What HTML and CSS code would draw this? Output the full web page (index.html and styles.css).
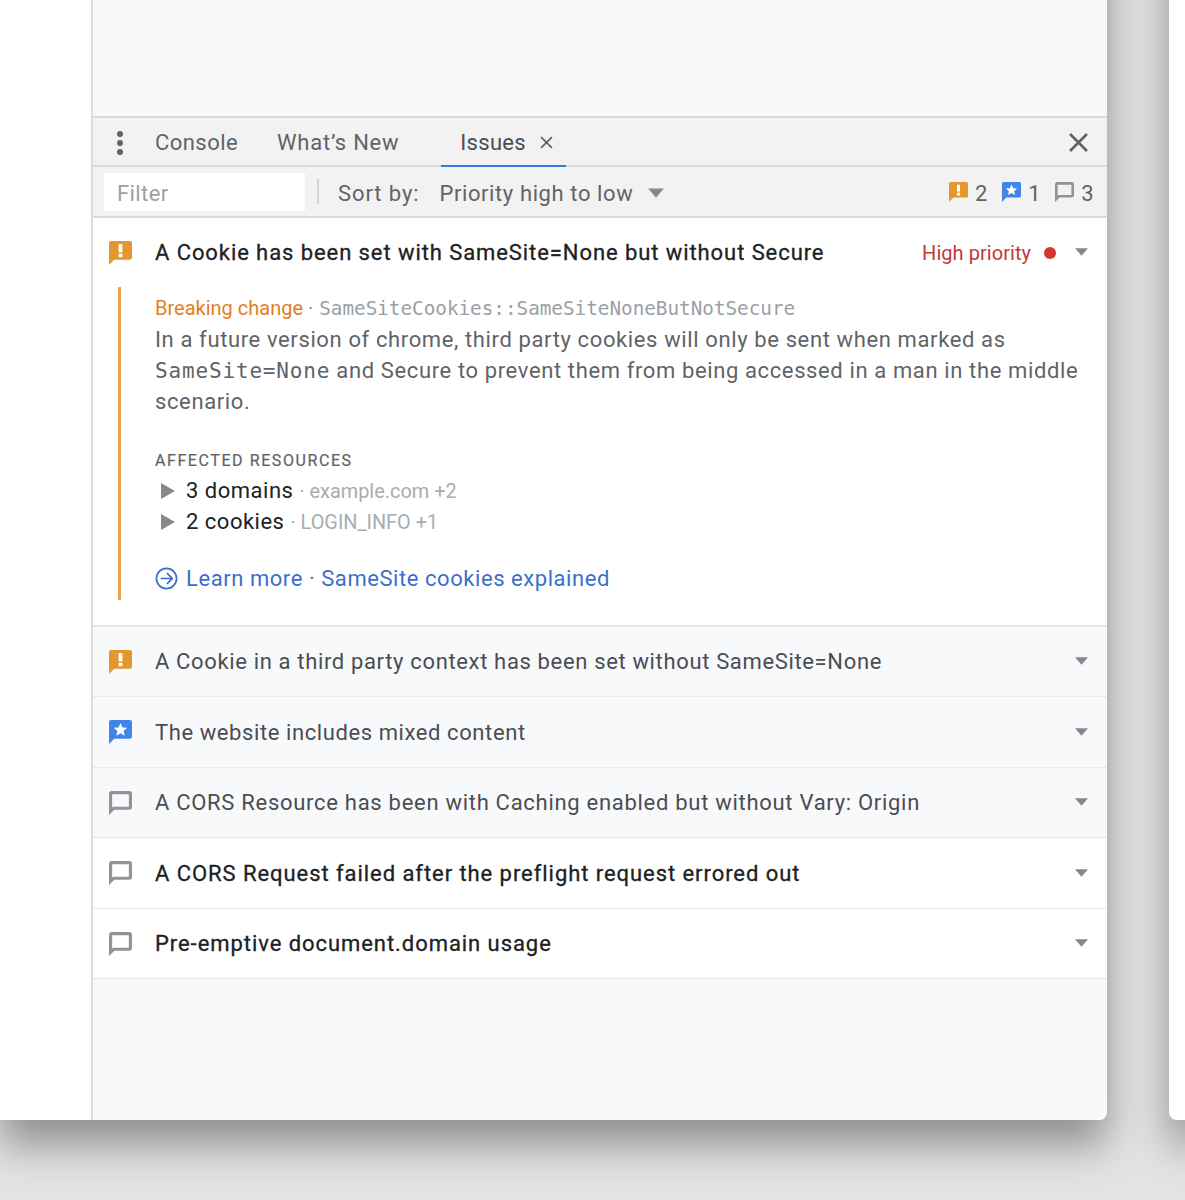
FILE: index.html
```html
<!DOCTYPE html>
<html lang="en">
<head>
<meta charset="utf-8">
<title>Issues</title>
<link rel="stylesheet" href="styles.css">
</head>
<body>
<svg class="defs" width="0" height="0" aria-hidden="true">
  <symbol id="warn" viewBox="0 0 22 23"><path fill="#e4962f" d="M2 0h18a2 2 0 0 1 2 2v14a2 2 0 0 1-2 2H5l-5 5V2a2 2 0 0 1 2-2z"/><rect x="9.200" y="3" width="3.600" height="8" fill="#fff"/><rect x="9.200" y="12.300" width="3.600" height="3.200" fill="#fff"/></symbol>
  <symbol id="star" viewBox="0 0 22 23"><path fill="#4285e8" d="M2 0h18a2 2 0 0 1 2 2v14a2 2 0 0 1-2 2H5l-5 5V2a2 2 0 0 1 2-2z"/><path fill="#fff" d="M11 2.800l1.900 4.300 4.600.4-3.500 3 1.100 4.600-4.100-2.400-4.100 2.400 1.100-4.600-3.500-3 4.600-.4z"/></symbol>
  <symbol id="chat" viewBox="0 0 22 23"><path fill="none" stroke="#909397" stroke-width="3" d="M2.600 1.500h16.800a1.100 1.100 0 0 1 1.100 1.100v12.800a1.100 1.100 0 0 1-1.100 1.100H4.500l-3 3V2.600a1.100 1.100 0 0 1 1.100-1.100z"/></symbol>
  <symbol id="caret" viewBox="0 0 12 7"><path fill="#85888c" d="M0 0h12L6 7z"/></symbol>
</svg>
<main class="window">
  <div class="sidebar"></div>
  <div class="devtools">
    <div class="page-area"></div>
    <div class="tabbar">
      <span class="dots"><i></i><i></i><i></i></span>
      <span class="tab tab-console">Console</span>
      <span class="tab tab-new">What’s New</span>
      <span class="tab tab-active">Issues <svg class="tab-x" viewBox="0 0 12 12"><path d="M1 1l10 10M11 1L1 11"/></svg></span>
      <svg class="close" viewBox="0 0 18 18"><path d="M1 1l16 16M17 1L1 17"/></svg>
    </div>
    <div class="toolbar">
      <span class="filter">Filter</span>
      <span class="sep"></span>
      <span class="sort-label">Sort by:</span>
      <span class="sort-value">Priority high to low</span>
      <svg class="sort-caret" viewBox="0 0 12 7"><use href="#caret"/></svg>
      <span class="counts">
        <svg class="count-icon"><use href="#warn"/></svg><span class="count">2</span>
        <svg class="count-icon"><use href="#star"/></svg><span class="count">1</span>
        <svg class="count-icon"><use href="#chat"/></svg><span class="count">3</span>
      </span>
    </div>
    <section class="issue-open">
      <div class="issue-head">
        <svg class="issue-icon"><use href="#warn"/></svg>
        <h2 class="issue-title">A Cookie has been set with SameSite=None but without Secure</h2>
        <span class="priority">High priority</span>
        <span class="dot"></span>
        <svg class="row-caret"><use href="#caret"/></svg>
      </div>
      <div class="detail">
        <p class="meta"><span class="breaking">Breaking change</span> <span class="meta-sep">·</span> <code class="code">SameSiteCookies::SameSiteNoneButNotSecure</code></p>
        <div class="desc">
          <p class="desc-line">In a future version of chrome, third party cookies will only be sent when marked as</p>
          <p class="desc-line"><code class="desc-code">SameSite=None</code> and Secure to prevent them from being accessed in a man in the middle</p>
          <p class="desc-line">scenario.</p>
        </div>
        <h3 class="affected">AFFECTED RESOURCES</h3>
        <div class="res"><span class="tri"></span><span class="res-name">3 domains</span><span class="res-info">· example.com +2</span></div>
        <div class="res"><span class="tri"></span><span class="res-name">2 cookies</span><span class="res-info">· LOGIN_INFO +1</span></div>
        <a class="learn" href="#"><svg class="learn-icon" viewBox="0 0 24 24"><circle cx="12" cy="12" r="10.500"/><path d="M6 12h11.500M12.500 6.500l5.500 5.500-5.500 5.500"/></svg>Learn more · SameSite cookies explained</a>
      </div>
    </section>
    <div class="row row-tint"><svg class="issue-icon"><use href="#warn"/></svg><span class="row-title">A Cookie in a third party context has been set without SameSite=None</span><svg class="row-caret"><use href="#caret"/></svg></div>
    <div class="row row-tint"><svg class="issue-icon"><use href="#star"/></svg><span class="row-title row-tight">The website includes mixed content</span><svg class="row-caret"><use href="#caret"/></svg></div>
    <div class="row row-tint"><svg class="issue-icon"><use href="#chat"/></svg><span class="row-title row-loose">A CORS Resource has been with Caching enabled but without Vary: Origin</span><svg class="row-caret"><use href="#caret"/></svg></div>
    <div class="row"><svg class="issue-icon"><use href="#chat"/></svg><span class="row-title row-strong">A CORS Request failed after the preflight request errored out</span><svg class="row-caret"><use href="#caret"/></svg></div>
    <div class="row"><svg class="issue-icon"><use href="#chat"/></svg><span class="row-title row-strong">Pre-emptive document.domain usage</span><svg class="row-caret"><use href="#caret"/></svg></div>
    <div class="rest"></div>
  </div>
</main>
<div class="window-next"></div>
</body>
</html>
```
FILE: styles.css
```css
* { box-sizing: border-box; }
html { margin: 0; height: 1200px; overflow: hidden; background: #e3e3e3; }
body {
  height: 1200px;
  margin: 0;
  display: flex;
  gap: 62px;
  font-family: Roboto, "Liberation Sans", sans-serif;
  font-size: 22px;
  color: #5f6368;
}
.defs { display: block; width: 0; height: 0; flex: none; margin-right: -62px; }
.window, .window-next {
  height: 1200px;
  margin-top: -80px;
  flex: none;
  box-shadow: 0 25px 40px rgba(0,0,0,.37);
}
.window {
  width: 1107px;
  display: flex;
  background: #fff;
  border-bottom-right-radius: 8px;
  overflow: hidden;
}
.window-next { width: 40px; background: #fff; border-bottom-left-radius: 8px; }
.sidebar { width: 91px; flex: none; background: #fff; }
.devtools {
  flex: 1;
  display: flex;
  flex-direction: column;
  background: #f8f9fb;
  border-left: 2px solid #dcdcdc;
  min-width: 0;
}
.page-area { height: 196px; flex: none; }
.tabbar {
  height: 51px;
  flex: none;
  display: flex;
  align-items: center;
  background: #f2f2f2;
  border-top: 2px solid #d9d9d9;
  border-bottom: 2px solid #d9d9d9;
  padding-top: 2px;
}
.dots { width: 6px; margin-left: 24px; display: flex; flex-direction: column; gap: 3px; }
.dots i { width: 6px; height: 6px; border-radius: 50%; background: #5f6368; }
.tab-console { margin-left: 32px; letter-spacing: .45px; }
.tab-new { margin-left: 39px; letter-spacing: .75px; }
.tab-active {
  margin-left: 42px;
  width: 125px;
  height: 47px;
  padding-left: 19px;
  align-self: flex-end;
  margin-bottom: -2px;
  border-bottom: 2px solid #3b78d8;
  color: #4a4d52;
  display: flex;
  align-items: center;
  gap: 14px;
  letter-spacing: .3px;
}
.tab-x { width: 13px; height: 13px; fill: none; stroke: #5f6368; stroke-width: 1.600; }
.close { width: 19px; height: 19px; margin-left: auto; margin-right: 19px; fill: none; stroke: #5f6368; stroke-width: 2.500; }
.toolbar {
  height: 51px;
  flex: none;
  display: flex;
  align-items: center;
  background: #f2f2f2;
  border-bottom: 2px solid #d9d9d9;
  padding: 0 13px 0 11px;
}
.filter {
  width: 201px;
  height: 38px;
  line-height: 41px;
  padding-left: 13px;
  background: #fff;
  color: #9aa0a6;
  letter-spacing: .4px;
}
.sep { width: 2px; height: 25px; margin-left: 12px; background: #d5d5d5; }
.sort-label { margin-left: 19px; letter-spacing: .9px; padding-top: 3px; }
.sort-value { margin-left: 20px; letter-spacing: .6px; padding-top: 3px; }
.sort-caret { width: 16px; height: 10px; margin-left: 15px; margin-top: 2px; }
.counts { margin-left: auto; display: flex; align-items: center; }
.count-icon { width: 19px; height: 20px; margin-left: 14.500px; margin-right: 7px; }
.count { letter-spacing: .3px; padding-top: 3px; }
.issue-open {
  height: 408.600px;
  flex: none;
  background: #fff;
  border-bottom: 2px solid #e4e4e4;
}
.issue-head {
  height: 69px;
  display: flex;
  align-items: center;
  padding: 0 19px 0 16px;
}
.issue-icon { width: 23px; height: 24px; flex: none; margin-right: 23px; }
.issue-title {
  margin: 0;
  font: 400 22px Roboto, "Liberation Sans", sans-serif;
  -webkit-text-stroke: .3px #202124;
  color: #202124;
  flex: 1;
  letter-spacing: .92px;
}
.priority { font-size: 20px; color: #c23a36; letter-spacing: .05px; }
.dot { width: 12px; height: 12px; margin-left: 13px; border-radius: 50%; background: #d2382e; }
.row-caret { width: 13px; height: 8px; flex: none; margin-left: auto; margin-bottom: 1px; }
.issue-head .row-caret { margin-left: 19px; }
.detail {
  margin-left: 25px;
  height: 313px;
  padding-left: 34px;
  border-left: 3px solid #e9a54b;
}
.meta { margin: 0; height: 31px; padding-top: 8px; line-height: 26px; font-size: 20px; white-space: nowrap; }
.breaking { color: #e37f22; }
.meta-sep { color: #80868b; margin-right: 1px; }
.code { font-family: "DejaVu Sans Mono", monospace; font-size: 19.300px; color: #9aa0a6; }
.desc { padding-top: 6px; }
.desc-line { margin: 0; height: 31px; line-height: 31px; letter-spacing: .62px; white-space: nowrap; }
.desc-code { font-family: "DejaVu Sans Mono", monospace; font-size: 21px; line-height: 1; letter-spacing: .84px; }
.affected { margin: 33px 0 0; font: 400 16px/22px Roboto, "Liberation Sans", sans-serif; -webkit-text-stroke: .2px #5f6368; letter-spacing: 1.580px; color: #5f6368; }
.res { display: flex; align-items: center; height: 31px; margin-top: 3px; }
.res + .res { margin-top: 0; }
.tri { width: 0; height: 0; margin-left: 6px; border-left: 14px solid #85888c; border-top: 8px solid transparent; border-bottom: 8px solid transparent; }
.res-name { margin-left: 11px; color: #202124; letter-spacing: .5px; }
.res-info { margin-left: 6px; padding-top: 2px; font-size: 19.900px; color: #a9acb0; }
.learn { display: flex; align-items: center; margin-top: 29px; color: #3a70cc; text-decoration: none; letter-spacing: .56px; }
.learn-icon { width: 23px; height: 23px; margin-right: 8px; fill: none; stroke: #3a70cc; stroke-width: 1.800; }
.row {
  height: 70.500px;
  flex: none;
  display: flex;
  align-items: center;
  padding: .8px 19px 0 16px;
  background: #fff;
  border-bottom: 1px solid #e8e9eb;
}
.row-tint { background: #f8f9fb; }
.row-title { letter-spacing: .65px; color: #4a4d52; }
.row-tight { letter-spacing: .59px; }
.row-loose { letter-spacing: .71px; }
.row-strong { color: #202124; -webkit-text-stroke: .3px #202124; letter-spacing: .94px; }
.rest { flex: 1; }
```
